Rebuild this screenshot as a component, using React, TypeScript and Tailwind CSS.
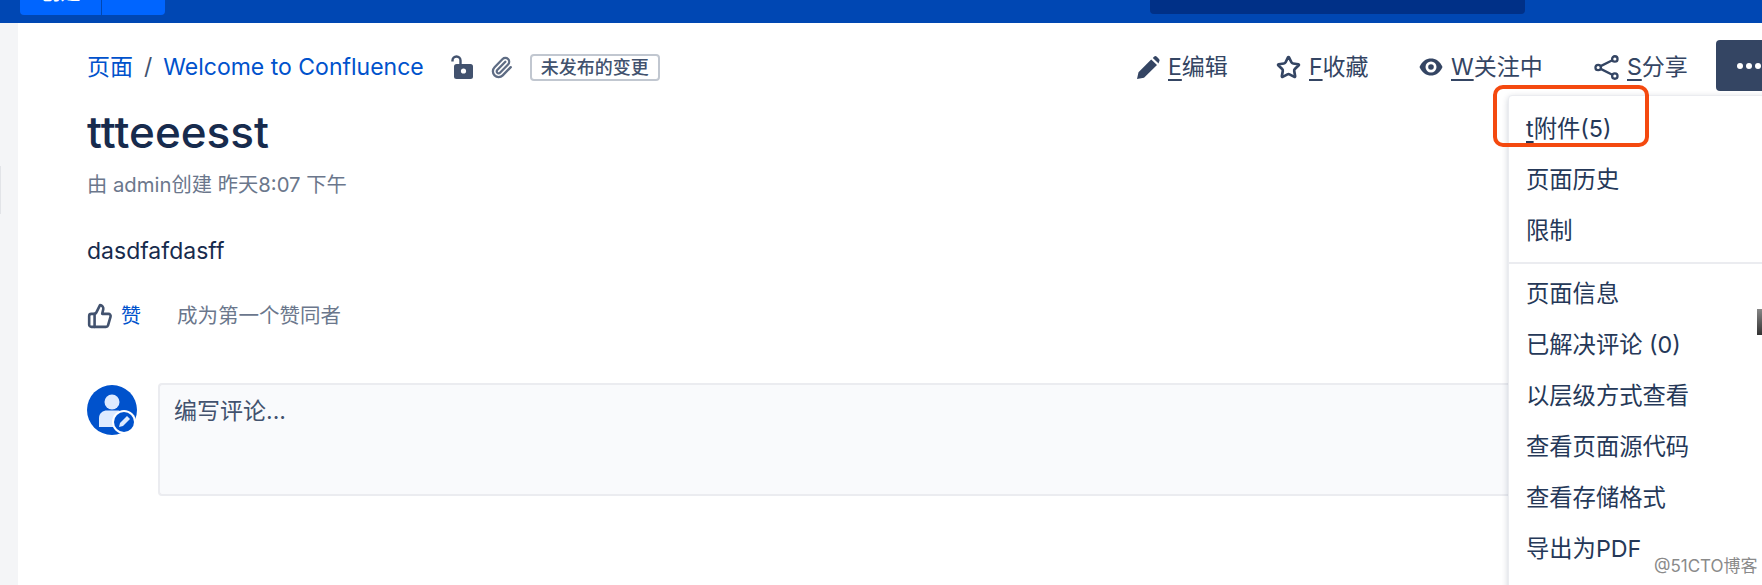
import React from 'react';
import { Paperclip, Star, ThumbsUp } from 'lucide-react';

const fontStack = 'font-["Inter","Noto_Sans_CJK_SC",sans-serif]';

const menuTop = ['页面历史', '限制'];
const menuBottom = ['页面信息', '已解决评论 (0)', '以层级方式查看', '查看页面源代码', '查看存储格式', '导出为PDF'];

const PencilIcon = () => (
  <svg viewBox="0 0 24 24" className="w-[24px] h-[25px] fill-[#344563]">
    <path d="M1 23.500l1.500-6.800L15.200 4l5.800 5.600L8 22.200 1 23.500zM16.800 2.400L18 1.200c.9-.8 2-.8 2.800 0l2.200 2.200c.8.8.8 2 0 2.800L22.600 8z" />
  </svg>
);

const EyeIcon = () => (
  <svg viewBox="0 0 24 24" className="w-[24px] h-[24px]">
    <path d="M.5 12C3 6 7.500 3.500 12 3.500S21 6 23.500 12C21 18 16.500 20.500 12 20.500S3 18 .5 12z" fill="#344563" />
    <circle cx="12" cy="12" r="5.500" fill="#ffffff" />
    <circle cx="12" cy="12" r="2.800" fill="#344563" />
  </svg>
);

const ShareIcon = () => (
  <svg viewBox="0 0 24 24" className="w-[25px] h-[25px] fill-none stroke-[#344563] stroke-[2.2]">
    <circle cx="4" cy="12" r="2.600" />
    <circle cx="20" cy="3.800" r="2.600" />
    <circle cx="20" cy="20.200" r="2.600" />
    <path d="M6.400 10.700L17.600 5.100M6.400 13.300l11.200 5.600" />
  </svg>
);

const LockIcon = () => (
  <svg viewBox="0 0 22 24" className="w-[22px] h-[24px]">
    <path d="M1.500 6.500V5.500a4 4 0 0 1 8 0V10" fill="none" stroke="#42526e" strokeWidth="2.400" />
    <rect x="3" y="9" width="19" height="15" rx="2.500" fill="#42526e" />
    <circle cx="12.500" cy="16" r="2.600" fill="#ffffff" />
  </svg>
);

const Avatar = () => (
  <svg viewBox="0 0 50 50" className="w-[50px] h-[50px] shrink-0 mt-[2px]">
    <circle cx="25" cy="25" r="25" fill="#0052cc" />
    <circle cx="25" cy="17" r="7.500" fill="#deebff" />
    <path d="M12 33c0-5 4-7.500 8-7.500h10c4 0 8 2.500 8 7.500v9H12z" fill="#deebff" />
    <circle cx="37" cy="37" r="12" fill="#ffffff" />
    <circle cx="37" cy="37" r="10" fill="#0052cc" />
    <path d="M32 42l1-4 7-7 3 3-7 7z" fill="#deebff" />
  </svg>
);

const ToolbarButton = ({ icon, hotkey, label, width }: { icon: React.ReactNode; hotkey: string; label: string; width: string }) => (
  <div className={`flex items-center gap-[8px] ${width}`}>
    {icon}
    <span className="text-[23px] text-[#344563]">
      <span className="underline underline-offset-[4px]">{hotkey}</span>
      {label}
    </span>
  </div>
);

export default function App() {
  return (
    <div className={`relative w-[1762px] h-[585px] overflow-hidden bg-white flex flex-col ${fontStack}`}>
      {/* top nav, cut off by the crop */}
      <header className="h-[23px] shrink-0 bg-[#0047b3] flex items-start pl-[20px] pr-[237px] justify-between">
        <div className="flex h-[15px] w-[145px] rounded-b-[4px] bg-[#0065ff] overflow-hidden">
          <div className="w-[82px] border-r border-[#0047b3] flex items-start justify-center">
            <span className="text-white text-[20px] leading-none -translate-y-[17px]">创建</span>
          </div>
        </div>
        <div className="h-[14px] w-[375px] rounded-b-[4px] bg-[#003087]" />
      </header>

      <div className="flex flex-1 min-h-0">
        <aside className="w-[18px] shrink-0 bg-[#f4f5f7]" />

        <main className="flex-1 min-w-0 pl-[69px]">
          <div className="flex items-center h-[46px] mt-[21px] pr-[48px] justify-between">
            <div className="flex items-center">
              <span className="text-[23px] text-[#0052cc]">页面</span>
              <span className="text-[23px] text-[#42526e] mx-[11px]">/</span>
              <span className="text-[23px] text-[#0052cc]">Welcome to Confluence</span>
              <div className="ml-[27px] flex items-center gap-[17px]">
                <LockIcon />
                <Paperclip size={23} strokeWidth={2.4} className="text-[#5e6c84]" />
              </div>
              <span className="ml-[17px] h-[27px] px-[9px] flex items-center rounded-[4px] border-2 border-[#c1c7d0] text-[18px] font-medium text-[#42526e]">
                未发布的变更
              </span>
            </div>
            <div className="flex items-center">
              <ToolbarButton width="w-[140px]" icon={<PencilIcon />} hotkey="E" label="编辑" />
              <ToolbarButton width="w-[143px]" icon={<Star size={25} strokeWidth={2.6} className="text-[#344563]" />} hotkey="F" label="收藏" />
              <ToolbarButton width="w-[175px]" icon={<EyeIcon />} hotkey="W" label="关注中" />
              <ToolbarButton width="w-[120px]" icon={<ShareIcon />} hotkey="S" label="分享" />
            </div>
          </div>

          <h1 className="mt-[16px] text-[44px] leading-[52px] font-medium text-[#172b4d]">ttteeesst</h1>
          <p className="mt-[13px] text-[20.300px] leading-[28px] text-[#6b778c]">由 admin创建 昨天8:07 下午</p>
          <p className="mt-[36px] text-[23px] leading-[32px] text-[#172b4d]">dasdfafdasff</p>

          <div className="mt-[33px] flex items-center h-[32px]">
            <ThumbsUp size={26} strokeWidth={2.4} className="text-[#42526e]" />
            <span className="ml-[8px] text-[20px] text-[#0052cc]">赞</span>
            <span className="ml-[36px] text-[20.500px] text-[#6b778c]">成为第一个赞同者</span>
          </div>

          <div className="mt-[51px] flex gap-[21px]">
            <Avatar />
            <div className="h-[113px] flex-1 rounded-[4px] rounded-r-none border-2 border-r-0 border-[#ebecf0] bg-[#f9fafc] px-[14px] pt-[9px] text-[23px] text-[#42526e]">
              编写评论...
            </div>
          </div>
        </main>
      </div>

      {/* more button, its menu and the annotation lie over the page */}
      <div className="absolute left-[1716px] top-[40px] w-[60px] h-[51px] rounded-[4px] bg-[#344563] flex items-center pl-[21px] gap-[3px]">
        <i className="w-[6px] h-[6px] rounded-full bg-white" />
        <i className="w-[6px] h-[6px] rounded-full bg-white" />
        <i className="w-[6px] h-[6px] rounded-full bg-white" />
      </div>

      <div className="absolute left-[1508px] top-[95px] w-[270px] h-[500px] rounded-[4px] bg-white border border-[#ebecf0] shadow-[0_2px_6px_rgba(9,30,66,0.2)] pt-[8px] text-[23.300px] text-[#253858]">
        <div className="h-[51px] flex items-center pl-[17px]">
          <span><span className="underline underline-offset-[4px]">t</span>附件(5)</span>
        </div>
        {menuTop.map((item) => (
          <div key={item} className="h-[51px] flex items-center pl-[17px]">{item}</div>
        ))}
        <div className="my-[5px] border-t-2 border-[#ebecf0]" />
        {menuBottom.map((item) => (
          <div key={item} className="h-[51px] flex items-center pl-[17px]">{item}</div>
        ))}
      </div>

      <div className="absolute left-[1493px] top-[85px] w-[156px] h-[62px] rounded-[10px] border-[4px] border-[#f4490f]" />

      <div className="absolute left-0 top-[166px] w-[1px] h-[48px] bg-[#e2e4e8]" />
      <div className="absolute left-[1757px] top-[309px] w-[5px] h-[26px] bg-gradient-to-b from-[#888888] to-[#333333]" />
      <span className="absolute left-[1654px] top-[556px] text-[17px] leading-[20px] text-[#8a8a8a]">@51CTO博客</span>
    </div>
  );
}
